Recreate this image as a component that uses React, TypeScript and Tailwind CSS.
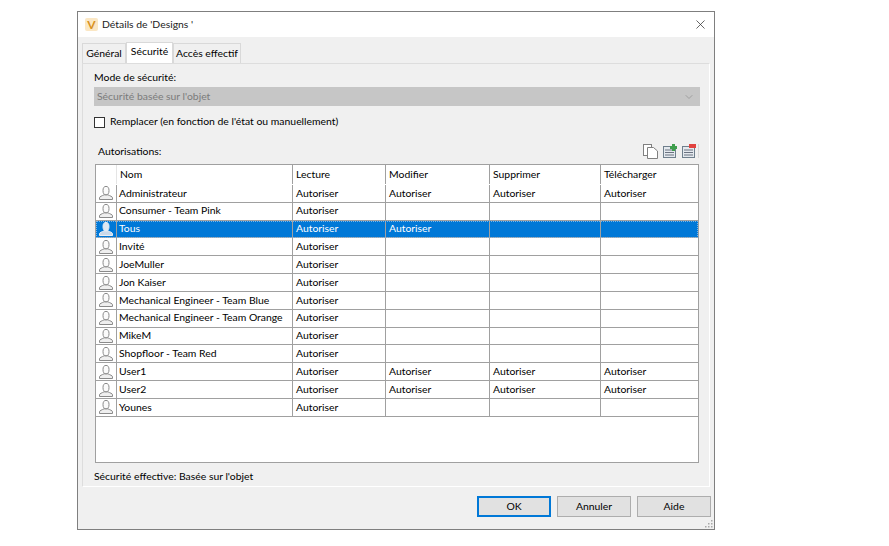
import { ChevronDown, X } from 'lucide-react';

type Row = { name: string; read: boolean; modify?: boolean; del?: boolean; download?: boolean; selected?: boolean };

const rows: Row[] = [
  { name: 'Administrateur', read: true, modify: true, del: true, download: true },
  { name: 'Consumer - Team Pink', read: true },
  { name: 'Tous', read: true, modify: true, selected: true },
  { name: 'Invité', read: true },
  { name: 'JoeMuller', read: true },
  { name: 'Jon Kaiser', read: true },
  { name: 'Mechanical Engineer - Team Blue', read: true },
  { name: 'Mechanical Engineer - Team Orange', read: true },
  { name: 'MikeM', read: true },
  { name: 'Shopfloor - Team Red', read: true },
  { name: 'User1', read: true, modify: true, del: true, download: true },
  { name: 'User2', read: true, modify: true, del: true, download: true },
  { name: 'Younes', read: true },
];

function UserIcon({ light }: { light?: boolean }) {
  const stroke = light ? '#e8eef5' : '#8a8a8a';
  return (
    <svg width="16" height="16" viewBox="0 0 16 16" stroke={stroke} aria-hidden="true">
      <path d="M1.5 14.5 V12.8 C1.5 11.5 4 11 6 9.8 H10 C12 11 14.5 11.5 14.5 12.8 V14.5 Z" fill={light ? '#c9d9ea' : '#efefef'} />
      <ellipse cx="8" cy="5.6" rx="3" ry="4.2" fill={light ? '#dfe8f2' : '#fbfbfb'} />
    </svg>
  );
}

function CopyIcon() {
  return (
    <svg width="15" height="15" viewBox="0 0 15 15" fill="#ffffff" stroke="#808080" aria-hidden="true">
      <rect x="0.5" y="0.5" width="8" height="11" />
      <path d="M4.5 3.5 H10.5 L14.5 7 V14.5 H4.5 Z" />
    </svg>
  );
}

function ListIcon({ badge }: { badge: 'add' | 'remove' }) {
  return (
    <svg width="14" height="14" viewBox="0 0 14 14" aria-hidden="true">
      <rect x="0.5" y="2.5" width="12" height="11" fill="#e4e9ee" stroke="#6f7f8c" />
      <path d="M2 6 H11 M2 8.5 H11 M2 11 H11" stroke="#6b7280" />
      {badge === 'add' ? (
        <path d="M9 0 H12 V2 H14 V5 H12 V7 H9 V5 H7 V2 H9 Z" fill="#3f9e4d" />
      ) : (
        <rect x="7" y="0" width="7" height="4" fill="#e2433f" />
      )}
    </svg>
  );
}

function Cell({ children, className }: { children?: React.ReactNode; className: string }) {
  return <div className={`flex items-center whitespace-nowrap border-r border-[#a0a0a0] ${className}`}>{children}</div>;
}

export default function App() {
  return (
    <div className="min-h-[546px] bg-white pl-[77px] pt-[11px] font-['Lato',sans-serif] text-[10.4px] text-black">
      <div className="flex h-[519px] w-[638px] flex-col border border-[#7f7f7f] bg-[#f0f0f0]">
        {/* Title bar */}
        <div className="flex h-[25px] shrink-0 items-center bg-white pl-[7px] pr-[6px]">
          <div className="flex h-[13px] w-[13px] items-center justify-center rounded-[2px] bg-[#fbe7c4] text-[12px] leading-none font-bold text-[#d9921e]">V</div>
          <span className="ml-[4px] text-[#222222]">Détails de 'Designs '</span>
          <X className="ml-auto text-[#333333]" size={15} strokeWidth={1.2} />
        </div>

        {/* Tabs */}
        <div className="relative z-10 ml-[4px] mt-[5px] flex h-[21px] shrink-0 items-end whitespace-nowrap">
          <div className="flex h-[20px] w-[44px] items-center justify-center border border-b-0 border-[#d9d9d9] bg-[#f0f0f0]">Général</div>
          <div className="flex h-[21px] w-[47px] justify-center border border-b-0 border-[#d9d9d9] bg-white pt-[1px]">Sécurité</div>
          <div className="flex h-[20px] w-[68px] items-center justify-center border border-b-0 border-[#d9d9d9] bg-[#f0f0f0]">Accès effectif</div>
        </div>

        {/* Panel */}
        <div className="mx-[4px] flex h-[424px] shrink-0 flex-col border border-[#dddddd] border-b-white border-r-white bg-[#f0f0f0] px-[11px]">
          <div className="mt-[5px] h-[16px] leading-[16px]">Mode de sécurité:</div>
          <div className="mt-[2px] flex h-[19px] w-[606px] items-center justify-between bg-[#c6c6c6] pl-[3px] pr-[5px] text-[#7b7b7b]">
            <span>Sécurité basée sur l'objet</span>
            <ChevronDown size={12} className="text-[#a0a0a0]" />
          </div>
          <div className="mt-[7px] flex h-[18px] items-center">
            <span className="h-[11px] w-[11px] border border-[#333333] bg-white" />
            <span className="ml-[5px]">Remplacer (en fonction de l'état ou manuellement)</span>
          </div>
          <div className="mt-[10px] flex h-[23px] w-[606px] items-center pl-[4px]">
            <span className="mb-[1px]">Autorisations:</span>
            <div className="mb-[3px] ml-auto flex items-center gap-[5px] pr-[1px]">
              <CopyIcon />
              <ListIcon badge="add" />
              <ListIcon badge="remove" />
              <span className="-ml-[3px] h-[14px] w-px bg-[#d8d8d8]" />
            </div>
          </div>

          {/* Permissions table */}
          <div className="ml-[1px] flex h-[299px] w-[604px] flex-col border border-[#a0a0a0] bg-white">
            <div className="flex h-[20px] shrink-0 pb-px">
              <div className="w-[21px] border-r border-[#e5e5e5]" />
              <Cell className="w-[176px] pl-[3px]">Nom</Cell>
              <Cell className="w-[93px] pl-[3px]">Lecture</Cell>
              <Cell className="w-[104px] pl-[3px]">Modifier</Cell>
              <Cell className="w-[111px] pl-[3px]">Supprimer</Cell>
              <div className="flex flex-1 items-center pl-[3px]">Télécharger</div>
            </div>
            {rows.map((row) => (
              <div
                key={row.name}
                className={`flex h-[17.83px] shrink-0 border-b border-[#a0a0a0] ${row.selected ? 'bg-[#0078d7] text-white outline-1 -outline-offset-1 outline-dotted outline-[#7fb6e6]' : ''}`}
              >
                <div className="flex w-[21px] items-center justify-center border-r border-[#a0a0a0]">
                  <UserIcon light={row.selected} />
                </div>
                <Cell className="w-[176px] pl-[2px]">{row.name}</Cell>
                <Cell className="w-[93px] pl-[3px]">{row.read && 'Autoriser'}</Cell>
                <Cell className="w-[104px] pl-[3px]">{row.modify && 'Autoriser'}</Cell>
                <Cell className="w-[111px] pl-[3px]">{row.del && 'Autoriser'}</Cell>
                <div className="flex flex-1 items-center pl-[3px]">{row.download && 'Autoriser'}</div>
              </div>
            ))}
          </div>
          <div className="mt-[5px] h-[16px] leading-[16px]">Sécurité effective: Basée sur l'objet</div>
        </div>

        {/* Footer buttons */}
        <div className="relative flex flex-1 items-start justify-end gap-[6px] pr-[3px] pt-[9px]">
          <button className="h-[21px] w-[74px] border-2 border-[#0078d7] bg-[#e1e1e1]">OK</button>
          <button className="h-[21px] w-[74px] border border-[#adadad] bg-[#e1e1e1]">Annuler</button>
          <button className="h-[21px] w-[74px] border border-[#adadad] bg-[#e1e1e1]">Aide</button>
          <svg className="absolute bottom-[1px] right-[1px]" width="8" height="8" viewBox="0 0 8 8" fill="#a8a8a8" aria-hidden="true">
            <rect x="6" y="0" width="1.5" height="1.5" />
            <rect x="3" y="3" width="1.5" height="1.5" />
            <rect x="6" y="3" width="1.5" height="1.5" />
            <rect x="0" y="6" width="1.5" height="1.5" />
            <rect x="3" y="6" width="1.5" height="1.5" />
            <rect x="6" y="6" width="1.5" height="1.5" />
          </svg>
        </div>
      </div>
    </div>
  );
}
